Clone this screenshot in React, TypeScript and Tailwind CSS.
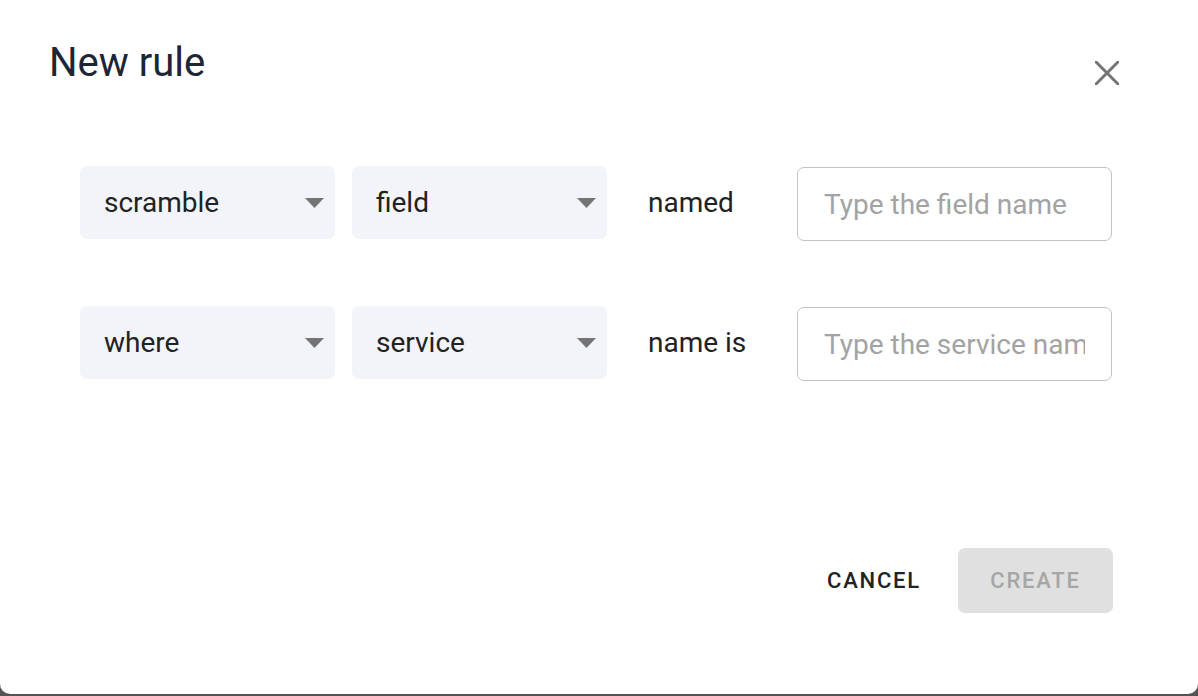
import { useState } from 'react';

const font = { fontFamily: 'Roboto, "Noto Sans", sans-serif' };

function Caret() {
  return (
    <svg width="19" height="10" viewBox="0 0 19 10" className="shrink-0">
      <polygon points="0,0 19,0 9.5,10" fill="#747474" />
    </svg>
  );
}

function Select({ value }: { value: string }) {
  return (
    <button
      type="button"
      className="flex h-[73px] w-[255px] items-center justify-between rounded-[7px] bg-[#f3f4f9] pl-[24px] pr-[11px] text-[28px] text-[#222222]"
    >
      <span>{value}</span>
      <Caret />
    </button>
  );
}

function RuleRow({ first, second, label, placeholder }: { first: string; second: string; label: string; placeholder: string }) {
  const [text, setText] = useState('');
  return (
    <div className="flex items-start">
      <Select value={first} />
      <div className="ml-[17px]">
        <Select value={second} />
      </div>
      <span className="ml-[41px] flex h-[73px] w-[149px] items-center text-[28px] text-[#222222]">{label}</span>
      <input
        value={text}
        onChange={(e) => setText(e.target.value)}
        placeholder={placeholder}
        className="mt-[1px] h-[74px] w-[315px] rounded-[7px] border-[1.5px] border-[#c4c4c4] bg-white pl-[26px] pr-[26px] text-[28px] text-[#222222] outline-none placeholder:text-[#a3a3a3]"
      />
    </div>
  );
}

export default function App() {
  return (
    <div className="h-[696px] w-[1198px] bg-[#545454]" style={font}>
      <div className="flex h-[694px] flex-col rounded-b-[10px] bg-white">
        <header className="flex items-start justify-between pl-[49px] pr-[79px] pt-[39px]">
          <h1 className="text-[40px] leading-[48px] font-normal text-[#1e2535]">New rule</h1>
          <button type="button" className="mt-[22px]" aria-label="Close">
            <svg width="24" height="24" viewBox="0 0 24 24">
              <path d="M1 1 L23 23 M23 1 L1 23" stroke="#747474" strokeWidth="3" strokeLinecap="round" />
            </svg>
          </button>
        </header>

        <div className="mt-[79px] flex flex-col gap-[65px] pl-[80px]">
          <RuleRow first="scramble" second="field" label="named" placeholder="Type the field name" />
          <RuleRow first="where" second="service" label="name is" placeholder="Type the service name" />
        </div>

        <footer className="mt-auto flex items-center justify-end gap-[21px] pb-[81px] pr-[85px]">
          <button type="button" className="h-[65px] px-[16px] text-[22px] font-medium tracking-[1.8px] text-[#222222]">
            CANCEL
          </button>
          <button
            type="button"
            disabled
            className="h-[65px] w-[155px] rounded-[7px] bg-[#e0e0e0] text-[22px] font-medium tracking-[1.8px] text-[#a6a6a6]"
          >
            CREATE
          </button>
        </footer>
      </div>
    </div>
  );
}
